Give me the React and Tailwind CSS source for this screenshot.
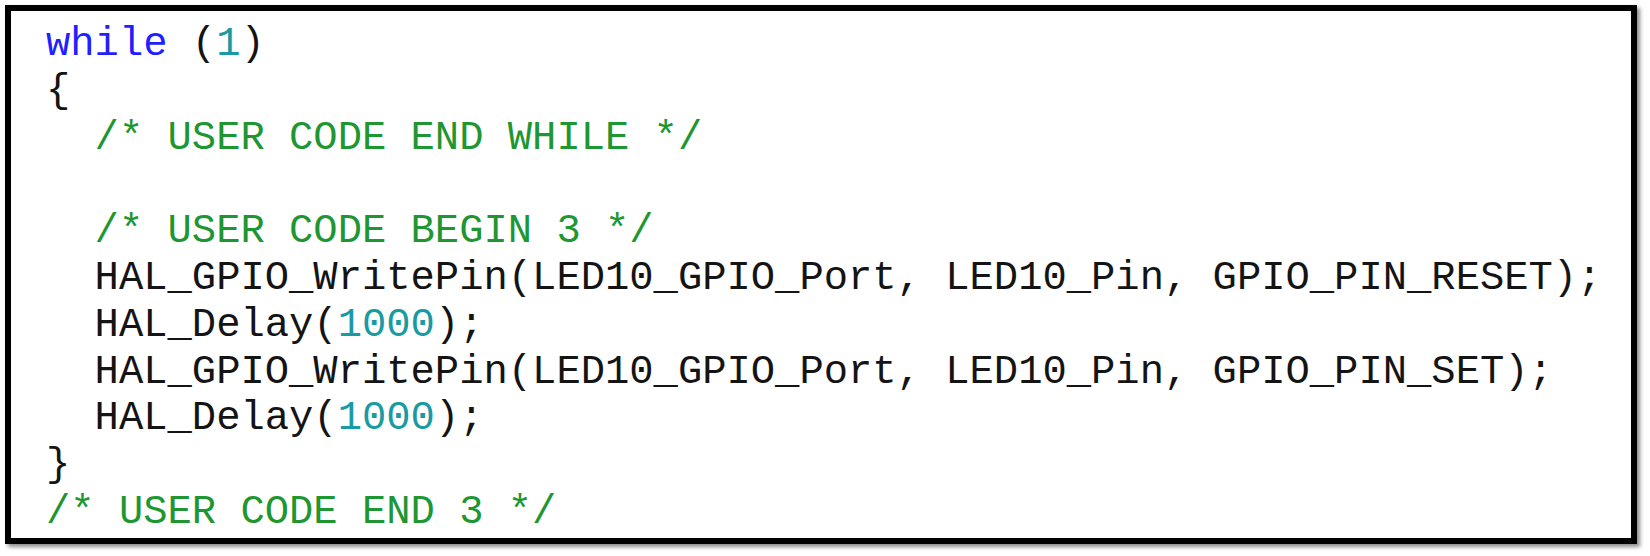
import React from "react";

const KW = "text-[#1f1fff]";
const NUM = "text-[#1a9aa2]";
const CMT = "text-[#1e9632]";
const TXT = "text-[#141414]";

// each line is a list of [text, colour] pieces
const lines = [
  [["while", KW], [" (", TXT], ["1", NUM], [")", TXT]],
  [["{", TXT]],
  [["  /* USER CODE END WHILE */", CMT]],
  [["", TXT]],
  [["  /* USER CODE BEGIN 3 */", CMT]],
  [["  HAL_GPIO_WritePin(LED10_GPIO_Port, LED10_Pin, GPIO_PIN_RESET);", TXT]],
  [["  HAL_Delay(", TXT], ["1000", NUM], [");", TXT]],
  [["  HAL_GPIO_WritePin(LED10_GPIO_Port, LED10_Pin, GPIO_PIN_SET);", TXT]],
  [["  HAL_Delay(", TXT], ["1000", NUM], [");", TXT]],
  [["}", TXT]],
  [["/* USER CODE END 3 */", CMT]],
];

const App = () => {
  return (
    <div className="w-full h-[556px] bg-white pt-[5px] pl-[5px]">
      <div className="w-[1632px] h-[539px] border-[6px] border-black bg-white overflow-hidden shadow-[3px_3px_4px_rgba(0,0,0,0.45)]">
        <pre className="pt-[10px] pl-[35px] font-['Liberation_Mono',monospace] text-[40.5px] leading-[46.8px] whitespace-pre">
          {lines.map((line, i) => (
            <div key={i} className="h-[46.8px]">
              {line.map(([t, c], j) => (
                <span key={j} className={c}>
                  {t}
                </span>
              ))}
            </div>
          ))}
        </pre>
      </div>
    </div>
  );
};

export default App;
